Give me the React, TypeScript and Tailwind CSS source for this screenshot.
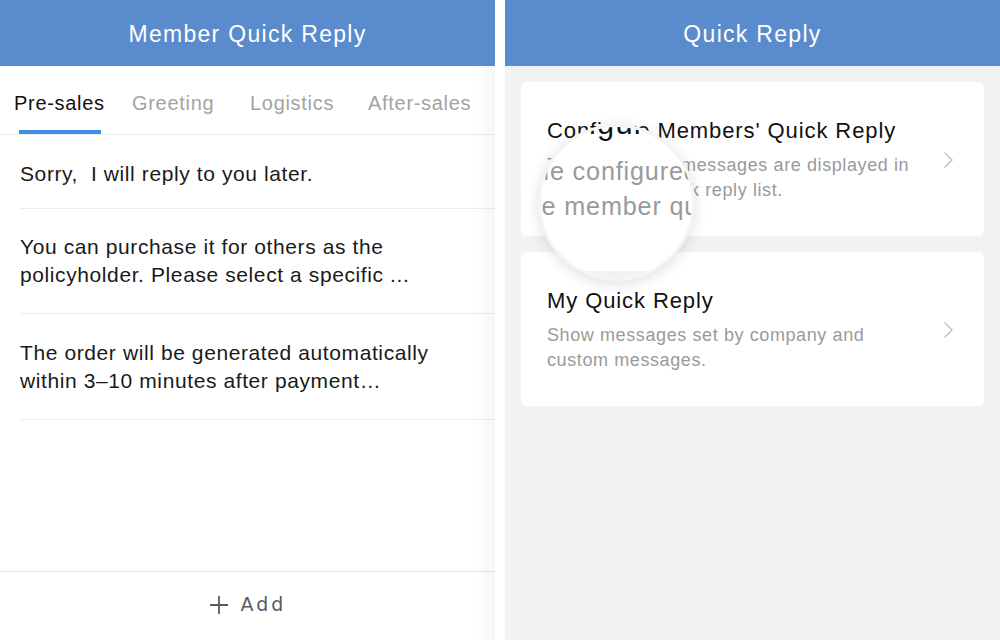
import React from "react";

function Chevron() {
  return (
    <svg width="12" height="18" viewBox="0 0 12 18" fill="none" className="shrink-0">
      <polyline points="2,2 9,9 2,16" stroke="#c4c4c4" strokeWidth="1.6" strokeLinecap="round" strokeLinejoin="round" />
    </svg>
  );
}

function Card({ title, lines }: { title: string; lines: string[] }) {
  return (
    <div className="h-[154px] bg-white rounded-[6px] flex items-center pl-[26px] pr-[29px] pt-[2px]">
      <div className="flex-1">
        <div className="text-[22px] leading-[28px] tracking-[0.9px] text-[#111] whitespace-nowrap">{title}</div>
        <div className="mt-[8px] text-[18px] leading-[25px] tracking-[0.6px] text-[#9a9a9a]">
          {lines.map((l) => (
            <div key={l} className="whitespace-nowrap">{l}</div>
          ))}
        </div>
      </div>
      <Chevron />
    </div>
  );
}

function RightBody() {
  return (
    <div className="w-[495px] h-[574px] bg-[#f2f2f2] px-[16px] pt-[16px] flex flex-col gap-[16px]">
      <Card
        title="Configure Members' Quick Reply"
        lines={["The configured messages are displayed in", "the member quick reply list."]}
      />
      <Card title="My Quick Reply" lines={["Show messages set by company and", "custom messages."]} />
    </div>
  );
}

export default function App() {
  const tabs = ["Pre-sales", "Greeting", "Logistics", "After-sales"];
  return (
    <div className="w-[1000px] h-[640px] bg-white flex font-['Liberation_Sans',Arial,sans-serif] overflow-hidden">
      {/* Left panel */}
      <div className="relative w-[495px] h-full flex flex-col bg-white">
        <div className="h-[66px] bg-[#5a8bcc] flex items-center justify-center text-white text-[23px] tracking-[1.3px] pt-[2px]">
          Member Quick Reply
        </div>
        <div className="h-[69px] border-b border-[#ececec] flex pl-[14px]">
          {tabs.map((t, i) => (
            <div key={t} className="w-[118px] shrink-0 flex items-stretch">
              <div className="relative flex items-center pt-[5px]">
                <span className={`text-[20px] tracking-[0.7px] whitespace-nowrap ${i === 0 ? "text-[#111]" : "text-[#a3a3a3]"}`}>{t}</span>
                {i === 0 && (
                  <div className="absolute bottom-0 left-[5px] right-[4px] h-[4px] bg-[#3b8de6]" />
                )}
              </div>
            </div>
          ))}
        </div>
        <div className="pl-[20px] text-[21px] leading-[28px] tracking-[0.6px] text-[#1a1a1a]">
          <div className="h-[74px] flex items-center border-b border-[#ececec] pt-[4px]">
            <div className="whitespace-nowrap">Sorry,&nbsp;&nbsp;I will reply to you later.</div>
          </div>
          <div className="h-[105px] flex items-center border-b border-[#ececec]">
            <div className="whitespace-nowrap">
              <div>You can purchase it for others as the</div>
              <div>policyholder. Please select a specific ...</div>
            </div>
          </div>
          <div className="h-[106px] flex items-center border-b border-[#ececec]">
            <div className="whitespace-nowrap">
              <div>The order will be generated automatically</div>
              <div>within 3–10 minutes after payment…</div>
            </div>
          </div>
        </div>
        <div className="flex-1" />
        <div className="h-[69px] border-t border-[#e2e2e2] flex items-center justify-center gap-[12px] text-[#545b64] pb-[3px]">
          <svg width="20" height="20" viewBox="0 0 20 20">
            <path d="M10 1v18M1 10h18" stroke="#545b64" strokeWidth="1.8" />
          </svg>
          <span className="text-[19px] tracking-[3px] font-['DejaVu_Sans',sans-serif]">Add</span>
        </div>
        <div className="pointer-events-none absolute right-0 top-[66px] bottom-0 w-[20px] bg-linear-to-r from-transparent to-[rgba(0,0,0,0.035)]" />
      </div>

      {/* Gap */}
      <div className="w-[10px] shrink-0 bg-white" />

      {/* Right panel */}
      <div className="relative w-[495px] h-full flex flex-col">
        <div className="h-[66px] bg-[#5a8bcc] flex items-center justify-center text-white text-[23px] tracking-[1.3px] pt-[2px]">
          Quick Reply
        </div>
        <RightBody />
        {/* Magnifier */}
        <div className="absolute left-[33px] top-[124px] w-[157px] h-[157px] rounded-full overflow-hidden bg-white border-[3px] border-[#f4f4f4] shadow-[0_3px_14px_rgba(0,0,0,0.12)]">
          <div className="absolute left-[-81.3px] top-[-93.9px] origin-top-left scale-[1.4]">
            <RightBody />
          </div>
        </div>
      </div>
    </div>
  );
}
